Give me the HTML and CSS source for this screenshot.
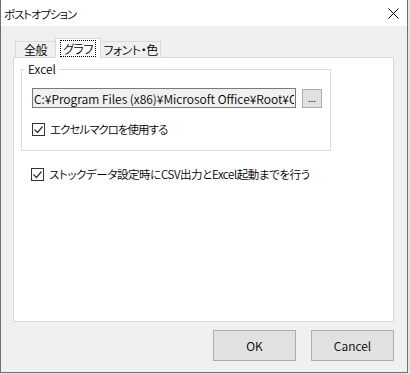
FILE: index.html
```html
<!DOCTYPE html>
<html lang="ja">
<head>
    <meta charset="UTF-8">
    <title>ポストオプション</title>
    <link rel="stylesheet" href="styles.css">
</head>
<body>
    <div class="window">
        <div class="titlebar">
            <span class="title">ポストオプション</span>
            <svg class="close" width="11" height="11" viewBox="0 0 11 11">
                <path d="M0.5 0.5 L10.5 10.5 M10.5 0.5 L0.5 10.5" stroke="#000" stroke-width="1" fill="none"/>
            </svg>
        </div>
        <div class="client">
            <div class="tabs">
                <div class="tab tab-general">全般</div>
                <div class="tab tab-graph active"><span class="focus">グラフ</span></div>
                <div class="tab tab-font">フォント・色</div>
            </div>
            <div class="panel">
                <fieldset class="group">
                    <legend>Excel</legend>
                    <div class="group-body">
                        <div class="path-row">
                            <input class="path" type="text" readonly value="C:¥Program Files (x86)¥Microsoft Office¥Root¥Office16¥EXCEL.EXE">
                            <button class="browse">...</button>
                        </div>
                        <label class="check tight">
                            <span class="box"><svg width="11" height="11" viewBox="0 0 11 11"><path d="M1.5 5.5 L4.5 8.5 L9.5 2.5" stroke="#333" stroke-width="1.2" fill="none"/></svg></span>
                            エクセルマクロを使用する
                        </label>
                    </div>
                </fieldset>
                <label class="check check-csv">
                    <span class="box"><svg width="11" height="11" viewBox="0 0 11 11"><path d="M1.5 5.5 L4.5 8.5 L9.5 2.5" stroke="#333" stroke-width="1.2" fill="none"/></svg></span>
                    ストックデータ設定時にCSV出力とExcel起動までを行う
                </label>
            </div>
            <div class="buttons">
                <button class="btn">OK</button>
                <button class="btn">Cancel</button>
            </div>
        </div>
    </div>
</body>
</html>
```

FILE: styles.css
```css
body {
    margin: 0;
    background: #e6e6e6;
    font-family: "Noto Sans CJK JP", "Noto Sans", sans-serif;
    font-size: 11px;
    font-weight: 350;
    font-feature-settings: "palt";
    color: #000;
}

.window {
    width: 408px;
    height: 373px;
    box-sizing: border-box;
    border: 1px solid #6f6f6f;
    border-top: 0;
    background: #f0f0f0;
    display: flex;
    flex-direction: column;
}

.titlebar {
    height: 26px;
    background: #fff;
    display: flex;
    align-items: center;
    padding-left: 3px;
}

.title {
    line-height: 14px;
    margin-top: 1px;
    font-size: 11.5px;
    letter-spacing: -1.1px;
}

.close {
    margin-left: auto;
    margin-right: 8px;
    margin-top: 1px;
}

.client {
    padding: 12px 13px 0 12px;
}

.tabs {
    display: flex;
    align-items: flex-end;
    height: 19px;
    padding-left: 2px;
    position: relative;
    z-index: 1;
}

.tab {
    box-sizing: border-box;
    height: 16px;
    border: 1px solid #d9d9d9;
    border-bottom: 0;
    background: #f0f0f0;
    font-size: 12px;
    line-height: 15px;
    text-align: center;
    letter-spacing: -0.5px;
}

.tab-general {
    width: 41px;
}

.tab-graph {
    width: 46px;
    margin-left: -1px;
}

.tab-font {
    width: 61px;
    margin-left: -1px;
}

.tab.active {
    height: 20px;
    margin-bottom: -1px;
    background: #fff;
    padding-top: 2px;
    position: relative;
}

.focus {
    display: inline-block;
    outline: 1px dotted #000;
    outline-offset: 0;
    padding: 0 2px;
    line-height: 15px;
}

.panel {
    box-sizing: border-box;
    width: 381px;
    height: 265px;
    border: 1px solid #d9d9d9;
    background: #fff;
    padding: 4px 0 0 7px;
}

.group {
    box-sizing: border-box;
    width: 310px;
    margin: 0;
    padding: 0 0 14px 0;
    border: 1px solid #dcdcdc;
    min-width: 0;
}

.group legend {
    margin-left: 3px;
    padding: 0 3px;
    line-height: 14px;
    font-size: 12px;
}

.group-body {
    padding: 12px 0 0 10px;
}

.path-row {
    display: flex;
    align-items: flex-start;
}

.path {
    box-sizing: border-box;
    width: 264px;
    height: 20px;
    margin: 0;
    padding: 0 1px;
    border: 1px solid #7a7a7a;
    background: #f0f0f0;
    font: inherit;
    font-size: 12px;
    font-feature-settings: "palt";
    color: #000;
    outline: none;
}

.browse {
    box-sizing: border-box;
    width: 20px;
    height: 19px;
    margin: 1px 0 0 6px;
    padding: 0;
    border: 1px solid #adadad;
    background: #e1e1e1;
    font: inherit;
    font-size: 9px;
    line-height: 17px;
    color: #000;
}

.check {
    display: flex;
    align-items: center;
    line-height: 14px;
    margin-top: 14px;
    font-size: 11.5px;
}

.check.tight {
    letter-spacing: -1px;
}

.box {
    box-sizing: border-box;
    width: 13px;
    height: 13px;
    border: 1px solid #333;
    background: #fff;
    margin-right: 5px;
    display: flex;
    letter-spacing: 0;
}

.check-csv {
    margin: 16px 0 0 10px;
    letter-spacing: -0.4px;
}

.buttons {
    display: flex;
    justify-content: flex-end;
    gap: 15px;
    margin-top: 8px;
}

.btn {
    box-sizing: border-box;
    width: 83px;
    height: 31px;
    border: 1px solid #adadad;
    background: #e1e1e1;
    font: inherit;
    font-size: 12px;
    color: #000;
    padding: 0;
}
```
